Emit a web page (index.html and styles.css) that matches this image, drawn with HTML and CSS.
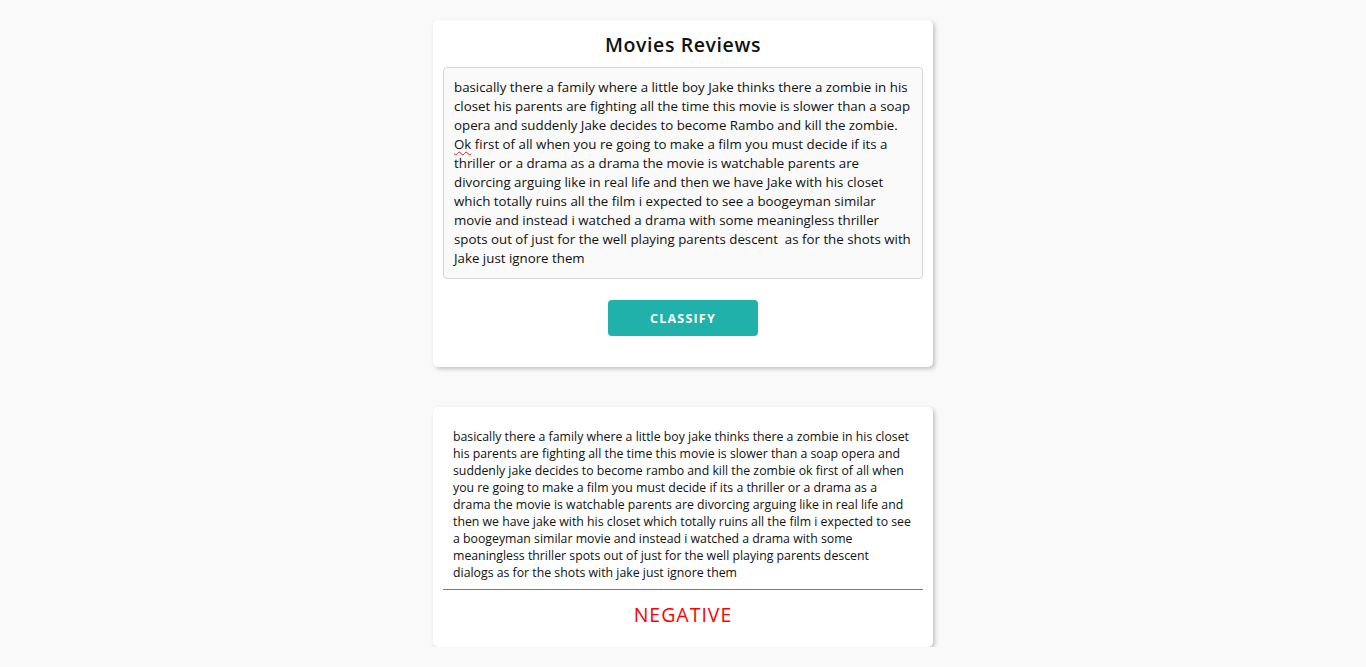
FILE: index.html
```html
<!DOCTYPE html>
<html lang="en">
<head>
<meta charset="utf-8">
<title>Movies Reviews</title>
<link rel="stylesheet" href="styles.css">
</head>
<body>
<main class="page">
  <section class="card">
    <h1 class="title">Movies Reviews</h1>
    <div class="review-input">basically there a family where a little boy Jake thinks there a zombie in his<br>closet his parents are fighting all the time this movie is slower than a soap<br>opera and suddenly Jake decides to become Rambo and kill the zombie.<br><span class="misspelled">Ok</span> first of all when you re going to make a film you must decide if its a<br>thriller or a drama as a drama the movie is watchable parents are<br>divorcing arguing like in real life and then we have Jake with his closet<br>which totally ruins all the film i expected to see a boogeyman similar<br>movie and instead i watched a drama with some meaningless thriller<br>spots out of just for the well playing parents descent&nbsp; as for the shots with<br>Jake just ignore them</div>
    <div class="actions"><button class="btn">CLASSIFY</button></div>
  </section>
  <section class="card result-card">
    <p class="result-text">basically there a family where a little boy jake thinks there a zombie in his closet<br>his parents are fighting all the time this movie is slower than a soap opera and<br>suddenly jake decides to become rambo and kill the zombie ok first of all when<br>you re going to make a film you must decide if its a thriller or a drama as a<br>drama the movie is watchable parents are divorcing arguing like in real life and<br>then we have jake with his closet which totally ruins all the film i expected to see<br>a boogeyman similar movie and instead i watched a drama with some<br>meaningless thriller spots out of just for the well playing parents descent<br>dialogs as for the shots with jake just ignore them</p>
    <hr class="divider">
    <div class="verdict">NEGATIVE</div>
  </section>
</main>
</body>
</html>
```
FILE: styles.css
```css
* { box-sizing: border-box; }
html, body { margin: 0; padding: 0; }
body {
  background: #f9f9f9;
  font-family: "Open Sans", "Noto Sans", sans-serif;
  color: #111;
}
.page {
  display: flex;
  flex-direction: column;
  align-items: center;
  padding-top: 20px;
  gap: 40px;
}
.card {
  width: 500px;
  background: #fff;
  border-radius: 5px;
  box-shadow: 2px 2px 4px rgba(0,0,0,0.22);
  padding: 10px;
}
.title {
  margin: 0 0 7px;
  font-size: 19.5px;
  line-height: 30px;
  font-weight: 600;
  text-align: center;
  letter-spacing: 0.6px;
  color: #111;
}
.review-input {
  background: #fafafa;
  border: 1px solid #d6d6d6;
  border-radius: 4px;
  padding: 10px;
  font-size: 13.3px;
  line-height: 19px;
  color: #111;
  white-space: nowrap;
  overflow: hidden;
}
.misspelled {
  text-decoration: underline wavy #e02020;
  text-decoration-thickness: 1px;
  text-underline-offset: 2px;
}
.actions {
  display: flex;
  justify-content: center;
  padding: 21px 0 21px;
}
.btn {
  width: 150px;
  height: 36px;
  border: none;
  border-radius: 4px;
  background: #20b2aa;
  color: #fff;
  font-family: inherit;
  font-size: 12.5px;
  font-weight: 700;
  letter-spacing: 1.2px;
  cursor: pointer;
}
.result-text {
  margin: 11px 10px 8px;
  font-size: 12.3px;
  line-height: 17px;
  color: #111;
  white-space: nowrap;
}
.divider {
  margin: 0;
  border: none;
  border-top: 1px solid #4a8f8c;
}
.verdict {
  text-align: center;
  color: #f00;
  font-size: 19.5px;
  font-weight: 500;
  line-height: 30px;
  letter-spacing: 1px;
  margin: 10px 0 7px;
}
```
